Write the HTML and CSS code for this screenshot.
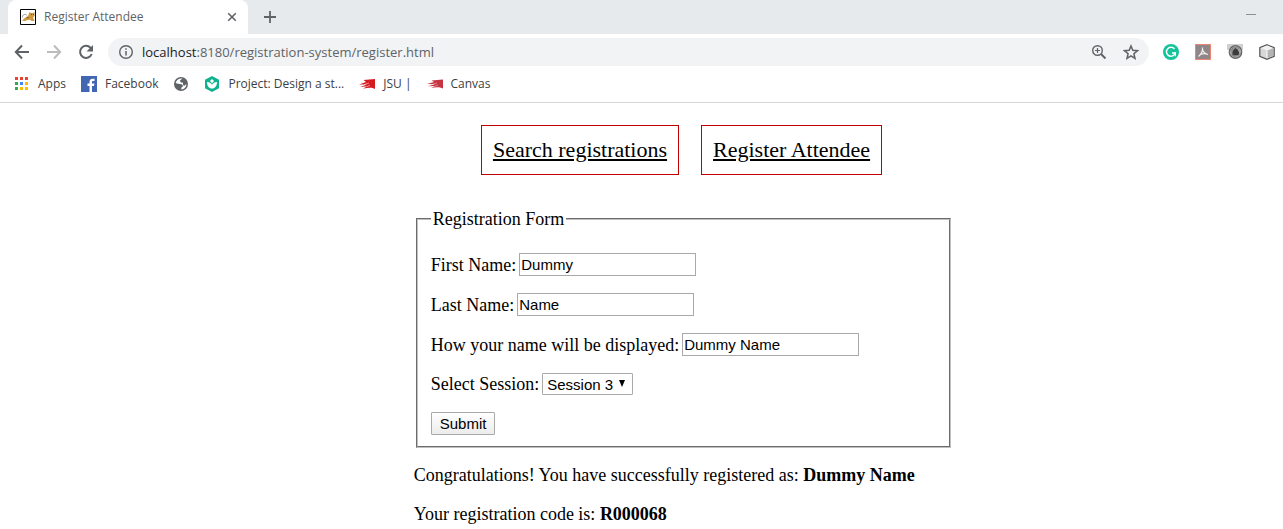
FILE: index.html
```html
<!DOCTYPE html>
<html lang="en">
<head>
<meta charset="utf-8">
<title>Register Attendee</title>
<link rel="stylesheet" href="styles.css">
</head>
<body>
<header class="browser">
  <div class="tabstrip">
    <div class="tab">
      <svg class="icon" viewBox="0 0 16 16"><path fill="#fff" stroke="#000" d="M.5.5h15v15H.5z"/><path fill="#d09a40" d="M2 12l2-2.500L8 7l1.500-4 1.500 1h2l1.500-1v4L13 8.500l1.500 3.500h-3L10 10.800l-3 .2-1.500 1z"/><path fill="#6b542c" d="M6 8.500l3-.5-1 1.500zM11 5h1v1h-1zM13 5h1v1h-1z"/><path fill="none" stroke="#999" d="M2.500 8.500c-.5-3 3-4 4.500-2"/></svg>
      <span class="tab-title">Register Attendee</span>
      <button class="bare" aria-label="Close tab"><svg class="icon-small" viewBox="0 0 10 10"><path d="M1.2 1.2l7.600 7.600M8.800 1.200L1.200 8.800" fill="none" stroke="#5f6368" stroke-width="1.600"/></svg></button>
    </div>
    <button class="bare new-tab" aria-label="New tab"><svg class="icon-mid" viewBox="0 0 12 12"><path d="M6 0v12M0 6h12" fill="none" stroke="#5f6368" stroke-width="1.800"/></svg></button>
    <button class="bare minimize" aria-label="Minimize"><svg class="icon-small" viewBox="0 0 10 10"><path d="M0 4.500h10" stroke="#8d9093"/></svg></button>
  </div>
  <div class="toolbar">
    <div class="nav-buttons">
      <button class="bare" aria-label="Back"><svg class="icon" viewBox="0 0 16 16"><path d="M15 8H2M8 1.500L1.800 8 8 14.500" fill="none" stroke="#5f6368" stroke-width="2"/></svg></button>
      <button class="bare" aria-label="Forward"><svg class="icon" viewBox="0 0 16 16"><path d="M1 8h13M8 1.500L14.200 8 8 14.500" fill="none" stroke="#babcbe" stroke-width="2"/></svg></button>
      <button class="bare" aria-label="Reload"><svg class="icon" viewBox="0 0 16 16"><path d="M13.700 10A6 6 0 1 1 12.500 3.800L13.500 5" fill="none" stroke="#5f6368" stroke-width="2"/><path d="M15 1v6.500H8.500z" fill="#5f6368"/></svg></button>
    </div>
    <div class="address">
      <svg class="icon" viewBox="0 0 16 16"><circle cx="8" cy="8" r="6.300" fill="none" stroke="#5f6368" stroke-width="1.400"/><path d="M8 7v4.500M8 4.300v1.500" stroke="#5f6368" stroke-width="1.500"/></svg>
      <span class="url"><span class="host">localhost</span>:8180/registration-system/register.html</span>
      <button class="bare" aria-label="Zoom"><svg class="icon" viewBox="0 0 16 16"><circle cx="6.500" cy="6.500" r="4.800" fill="none" stroke="#5f6368" stroke-width="1.400"/><path d="M10 10l4.500 4.500" stroke="#5f6368" stroke-width="2"/><path d="M6.500 4v5M4 6.500h5" stroke="#5f6368" stroke-width="1.200"/></svg></button>
      <button class="bare" aria-label="Bookmark"><svg class="icon" viewBox="0 0 16 16"><path d="M8 2l1.800 4.300 4.700.4-3.600 3 1.100 4.600L8 11.800l-4 2.500 1.100-4.600-3.600-3 4.700-.4z" fill="none" stroke="#5f6368" stroke-width="1.500"/></svg></button>
    </div>
    <div class="extensions">
      <svg class="icon" viewBox="0 0 16 16"><circle cx="8" cy="8" r="8" fill="#15c39a"/><path d="M11.500 5A4.500 4.500 0 1 0 12.300 9H9" fill="none" stroke="#fff" stroke-width="1.500"/><path d="M12.300 8v4.300" stroke="#fff" stroke-width="1.200"/></svg>
      <svg class="icon" viewBox="0 0 16 16"><path d="M.5.5h15v15H.5z" fill="#8f8787" stroke="#ee8270"/><path d="M7.500 3.500c.3 3-.5 6-4 9M7.700 6c.8 2.500 2.300 4 5.300 4.500M5.500 10.300c2-.8 4-1 6-.5" fill="none" stroke="#f4eeee" stroke-width="1.200"/></svg>
      <svg class="icon" viewBox="0 0 16 16"><path d="M0 0h16v6H0z" fill="#d0d0d0"/><circle cx="8.500" cy="8" r="6.300" fill="#aaa" stroke="#666" stroke-width="1.200"/><path d="M8.500 4c2.500 1.500 4 3.500 3.500 6.500-2 1.200-5 1.200-7 0 0-3 1.500-5.500 3.500-6.500z" fill="#3c3c3c"/><path d="M3 7.500c2.500-4 6.500-5 9.500-2.500M6.500 3c-3 4-1.500 8 2 10.500M14 9c-3.500 4-7 3.500-10 1.500" fill="none" stroke="#777" stroke-width=".8"/></svg>
      <svg class="icon" viewBox="0 0 16 16"><path d="M8 .7l7.200 3v8.600L8 15.300.8 12.300V3.700z" fill="#d8d8d8" stroke="#555" stroke-width="1.200"/><path d="M8 1.500l6 2.500-6 2.500L2 4z" fill="#f2f2f2"/><path d="M8 7l6-2.700v7.500l-6 2.700z" fill="#b4b4b4"/><path d="M8 7v7" stroke="#fff"/></svg>
    </div>
  </div>
  <nav class="bookmarks" aria-label="Bookmarks">
    <a href="#apps"><svg class="icon" viewBox="0 0 16 16"><path fill="#ea4335" d="M1 1h3v3H1zM6 1h3v3H6zM11 1h3v3h-3z"/><path fill="#34a853" d="M1 6h3v3H1zM1 11h3v3H1z"/><path fill="#4285f4" d="M6 6h3v3H6z"/><path fill="#fbbc05" d="M11 6h3v3h-3zM6 11h3v3H6zM11 11h3v3h-3z"/></svg>Apps</a>
    <a href="#facebook"><svg class="icon" viewBox="0 0 16 16"><path fill="#4267b2" d="M0 0h16v16H0z"/><path fill="#fff" d="M8.500 16v-6H6.500V7.600h2V6c0-2.200 1.300-3.300 3.200-3.300l1.800.1V5h-1.300c-1 0-1.200.5-1.200 1.200v1.400h2.400L13 10h-2v6z"/></svg>Facebook</a>
    <a href="#site" aria-label="Site"><svg class="icon" viewBox="0 0 16 16"><circle cx="8" cy="8" r="7" fill="#5f6368"/><path fill="#fff" d="M9.500 2.500L6.800 4.800 8 6.500l2 .3V9l1.500.8L13.300 8c.3 3-2 5.300-5 5.500V11.800l2-1.800-1.500-1.700-3.800-.5L2.700 7C3.200 4 6 2 9.500 2.500z"/></svg></a>
    <a href="#project"><svg class="icon" viewBox="0 0 16 16"><path fill="#10b28f" d="M8 0l7 3.700v8.600L8 16l-7-3.700V3.700z"/><path fill="#fff" d="M8 3l2 2-2 2.300L6 5zM3 6c2.800.2 4.300 1.300 5 3 .7-1.700 2.200-2.800 5-3 0 4-2 6.500-5 6.500S3 10 3 6z"/></svg>Project: Design a st...</a>
    <a href="#jsu"><svg class="icon" viewBox="0 0 16 16"><path fill="#d71920" d="M4.500 4L16 3v10c-2-1.200-4-1.500-5.500-1.300L4 12.500 8.500 10.300l-7.500.7 7-2.500L0 8.500l7-2.500z"/><path d="M5 8.700L10 7M8 10.700l3-1.500" stroke="#fff" stroke-width=".5"/></svg>JSU |</a>
    <a href="#canvas"><svg class="icon" viewBox="0 0 16 16"><path fill="#c73340" d="M4.500 4.500L16 3.500v9c-2-1-4-1.300-5.500-1.300L4 11.700l4.500-1.700-7.500.3 7-2L0 8l7-2z"/><path d="M5 8.500L10 7M8 10.300l3-1.300" stroke="#fff" stroke-width=".4"/></svg>Canvas</a>
  </nav>
</header>
<main class="page">
  <nav class="menu" aria-label="Main">
    <a href="#search">Search registrations</a>
    <a href="#register">Register Attendee</a>
  </nav>
  <div class="content">
    <form>
      <fieldset>
        <legend>Registration Form</legend>
        <div class="row"><label for="first">First Name:</label><input id="first" type="text" value="Dummy"></div>
        <div class="row"><label for="last">Last Name:</label><input id="last" type="text" value="Name"></div>
        <div class="row"><label for="display">How your name will be displayed:</label><input id="display" type="text" value="Dummy Name"></div>
        <div class="row"><label for="session">Select Session:</label><span class="select"><select id="session"><option>Session 3</option></select><svg class="arrow" viewBox="0 0 6 7"><path d="M0 0h6L3 7z"/></svg></span></div>
        <div class="row"><button class="submit" type="button">Submit</button></div>
      </fieldset>
    </form>
    <p>Congratulations! You have successfully registered as: <b>Dummy Name</b></p>
    <p>Your registration code is: <b>R000068</b></p>
  </div>
</main>
</body>
</html>
```

FILE: styles.css
```css
* { box-sizing: border-box; }
body {
  margin: 0;
  background: #fff;
  color: #000;
  font-family: "Liberation Serif", serif;
  font-size: 18px;
  line-height: 20px;
}
svg { display: block; flex: none; }
.icon { width: 16px; height: 16px; }
.icon-small { width: 10px; height: 10px; }
.icon-mid { width: 12px; height: 12px; }
.bare { padding: 0; border: 0; background: none; }

.browser {
  font-family: "Open Sans", sans-serif;
  font-size: 12px;
  line-height: 16px;
  border-bottom: 1px solid #d5d7da;
}
.tabstrip {
  display: flex;
  align-items: center;
  height: 34px;
  padding-left: 8px;
  background: #e7eaed;
}
.tab {
  display: flex;
  align-items: center;
  gap: 8px;
  width: 240px;
  height: 34px;
  padding: 0 11px 0 12px;
  border-radius: 8px 8px 0 0;
  background: #fff;
  color: #5f6368;
}
.tab-title { flex: 1; }
.new-tab { margin-left: 16px; }
.minimize { margin: 0 27px 4px auto; }
.toolbar {
  display: flex;
  align-items: center;
  gap: 14px;
  height: 36px;
  padding: 0 8px 0 14px;
}
.nav-buttons { display: flex; gap: 16px; }
.address {
  display: flex;
  flex: 1;
  align-items: center;
  gap: 16px;
  height: 28px;
  padding: 0 10px;
  border-radius: 14px;
  background: #f1f3f4;
}
.url {
  flex: 1;
  margin-left: -8px;
  color: #5f6368;
  font-size: 13px;
}
.host { color: #202124; }
.extensions { display: flex; gap: 16px; }
.bookmarks {
  display: flex;
  align-items: center;
  gap: 15px;
  height: 32px;
  padding: 0 14px 4px;
}
.bookmarks a {
  display: flex;
  align-items: center;
  gap: 8px;
  color: #3c4043;
  text-decoration: none;
  white-space: nowrap;
}

.page { padding: 22px 0 0 84px; }
.menu {
  display: flex;
  justify-content: center;
  gap: 22px;
  margin-bottom: 34px;
  padding-right: 4px;
  font-size: 22px;
  line-height: 28px;
}
.menu a {
  padding: 10px 11px;
  border: 1px solid #c00000;
  color: #000;
}
.content {
  width: 45%;
  min-width: 500px;
  margin: 0 auto;
}
fieldset {
  margin: 0 2px;
  padding: 24px 13px 11px;
  border: 2px groove #c0c0c0;
}
legend { padding: 0 2px; }
.row {
  display: flex;
  align-items: center;
  gap: 3px;
  min-height: 22px;
  margin-bottom: 17px;
}
.row:last-child { margin-bottom: 0; }
input, select, .submit {
  margin: 0;
  border: 1px solid #a9a9a9;
  background: #fff;
  color: #000;
  font-family: "Liberation Sans", Arial, sans-serif;
  font-size: 15px;
  line-height: 17px;
}
input {
  width: 177px;
  height: 23px;
  padding: 1px;
}
.select { position: relative; }
select {
  display: block;
  width: 91px;
  height: 22px;
  padding: 0 4px;
  border-radius: 1px;
  appearance: none;
}
.arrow {
  position: absolute;
  top: 7px;
  right: 8px;
  width: 6px;
  height: 7px;
  pointer-events: none;
}
.submit {
  height: 23px;
  padding: 0 8px;
  border-radius: 1px;
  background: linear-gradient(#fff, #ececec);
}
p { margin: 18px 0 19px; }
form + p { margin-top: 17px; }
```
